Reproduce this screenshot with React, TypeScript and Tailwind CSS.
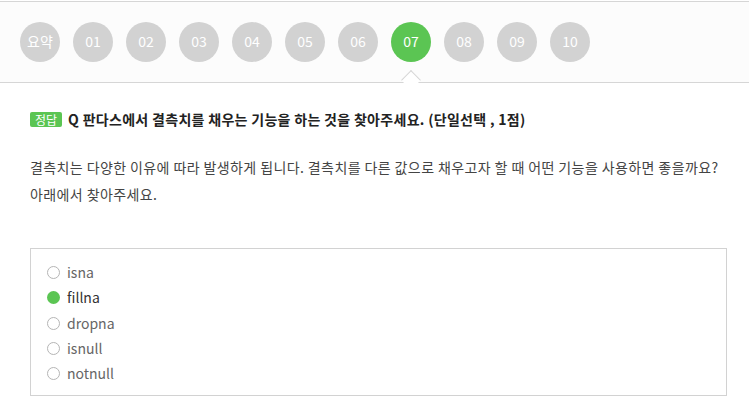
import React from "react";

const STEPS = ["요약", "01", "02", "03", "04", "05", "06", "07", "08", "09", "10"];
const CURRENT = "07";

const OPTIONS = ["isna", "fillna", "dropna", "isnull", "notnull"];
const ANSWER = "fillna";

const FONT = '"Noto Sans CJK KR", "Open Sans", sans-serif';

export default function App() {
	return (
		<div
			className="h-[416px] w-[749px] overflow-hidden bg-white pt-px text-[#333]"
			style={{ fontFamily: FONT }}
		>
			<nav className="relative flex h-[82px] items-center gap-[13px] border-y border-[#d6d6d6] bg-[#fcfcfc] px-5">
				{STEPS.map((s) => {
					const active = s === CURRENT;
					return (
						<div
							key={s}
							className={
								"relative flex h-10 w-10 items-center justify-center rounded-full text-[14px] text-white " +
								(active ? "bg-[#5bc553]" : "bg-[#d2d2d2]")
							}
						>
							<span className="-mt-px">{s}</span>
							{active && (
								<span className="absolute top-[51px] left-1/2 h-[14px] w-[14px] -translate-x-1/2 rotate-45 border-t border-l border-[#d6d6d6] bg-white" />
							)}
						</div>
					);
				})}
			</nav>

			<section className="px-[30px] pt-[26px]">
				<h2 className="flex items-center gap-[6px] text-[14px] font-semibold tracking-[0.3px] text-[#222]">
					<span className="rounded-[2px] bg-[#5bc553] px-[5px] text-[12px] leading-[15px] font-normal tracking-normal text-white">
						정답
					</span>
					<span>Q 판다스에서 결측치를 채우는 기능을 하는 것을 찾아주세요. (단일선택 , 1점)</span>
				</h2>

				<p className="mt-[24px] text-[14px] leading-[27px] tracking-[0.4px] text-[#444]">
					결측치는 다양한 이유에 따라 발생하게 됩니다. 결측치를 다른 값으로 채우고자 할 때 어떤 기능을 사용하면 좋을까요?
					<br />
					아래에서 찾아주세요.
				</p>

				<div className="mt-[40px] mr-[-8px] border border-[#d2d2d2] px-4 pt-[11px] pb-[9px]">
					{OPTIONS.map((o) => {
						const checked = o === ANSWER;
						return (
							<label key={o} className="flex h-[25.3px] items-center gap-[7px] text-[14px]">
								<span
									className={
										"h-[13px] w-[13px] rounded-full " +
										(checked ? "bg-[#5bc553]" : "border border-[#b5b5b5] bg-white")
									}
								/>
								<span className={checked ? "text-[#333]" : "text-[#666]"}>{o}</span>
							</label>
						);
					})}
				</div>
			</section>
		</div>
	);
}
